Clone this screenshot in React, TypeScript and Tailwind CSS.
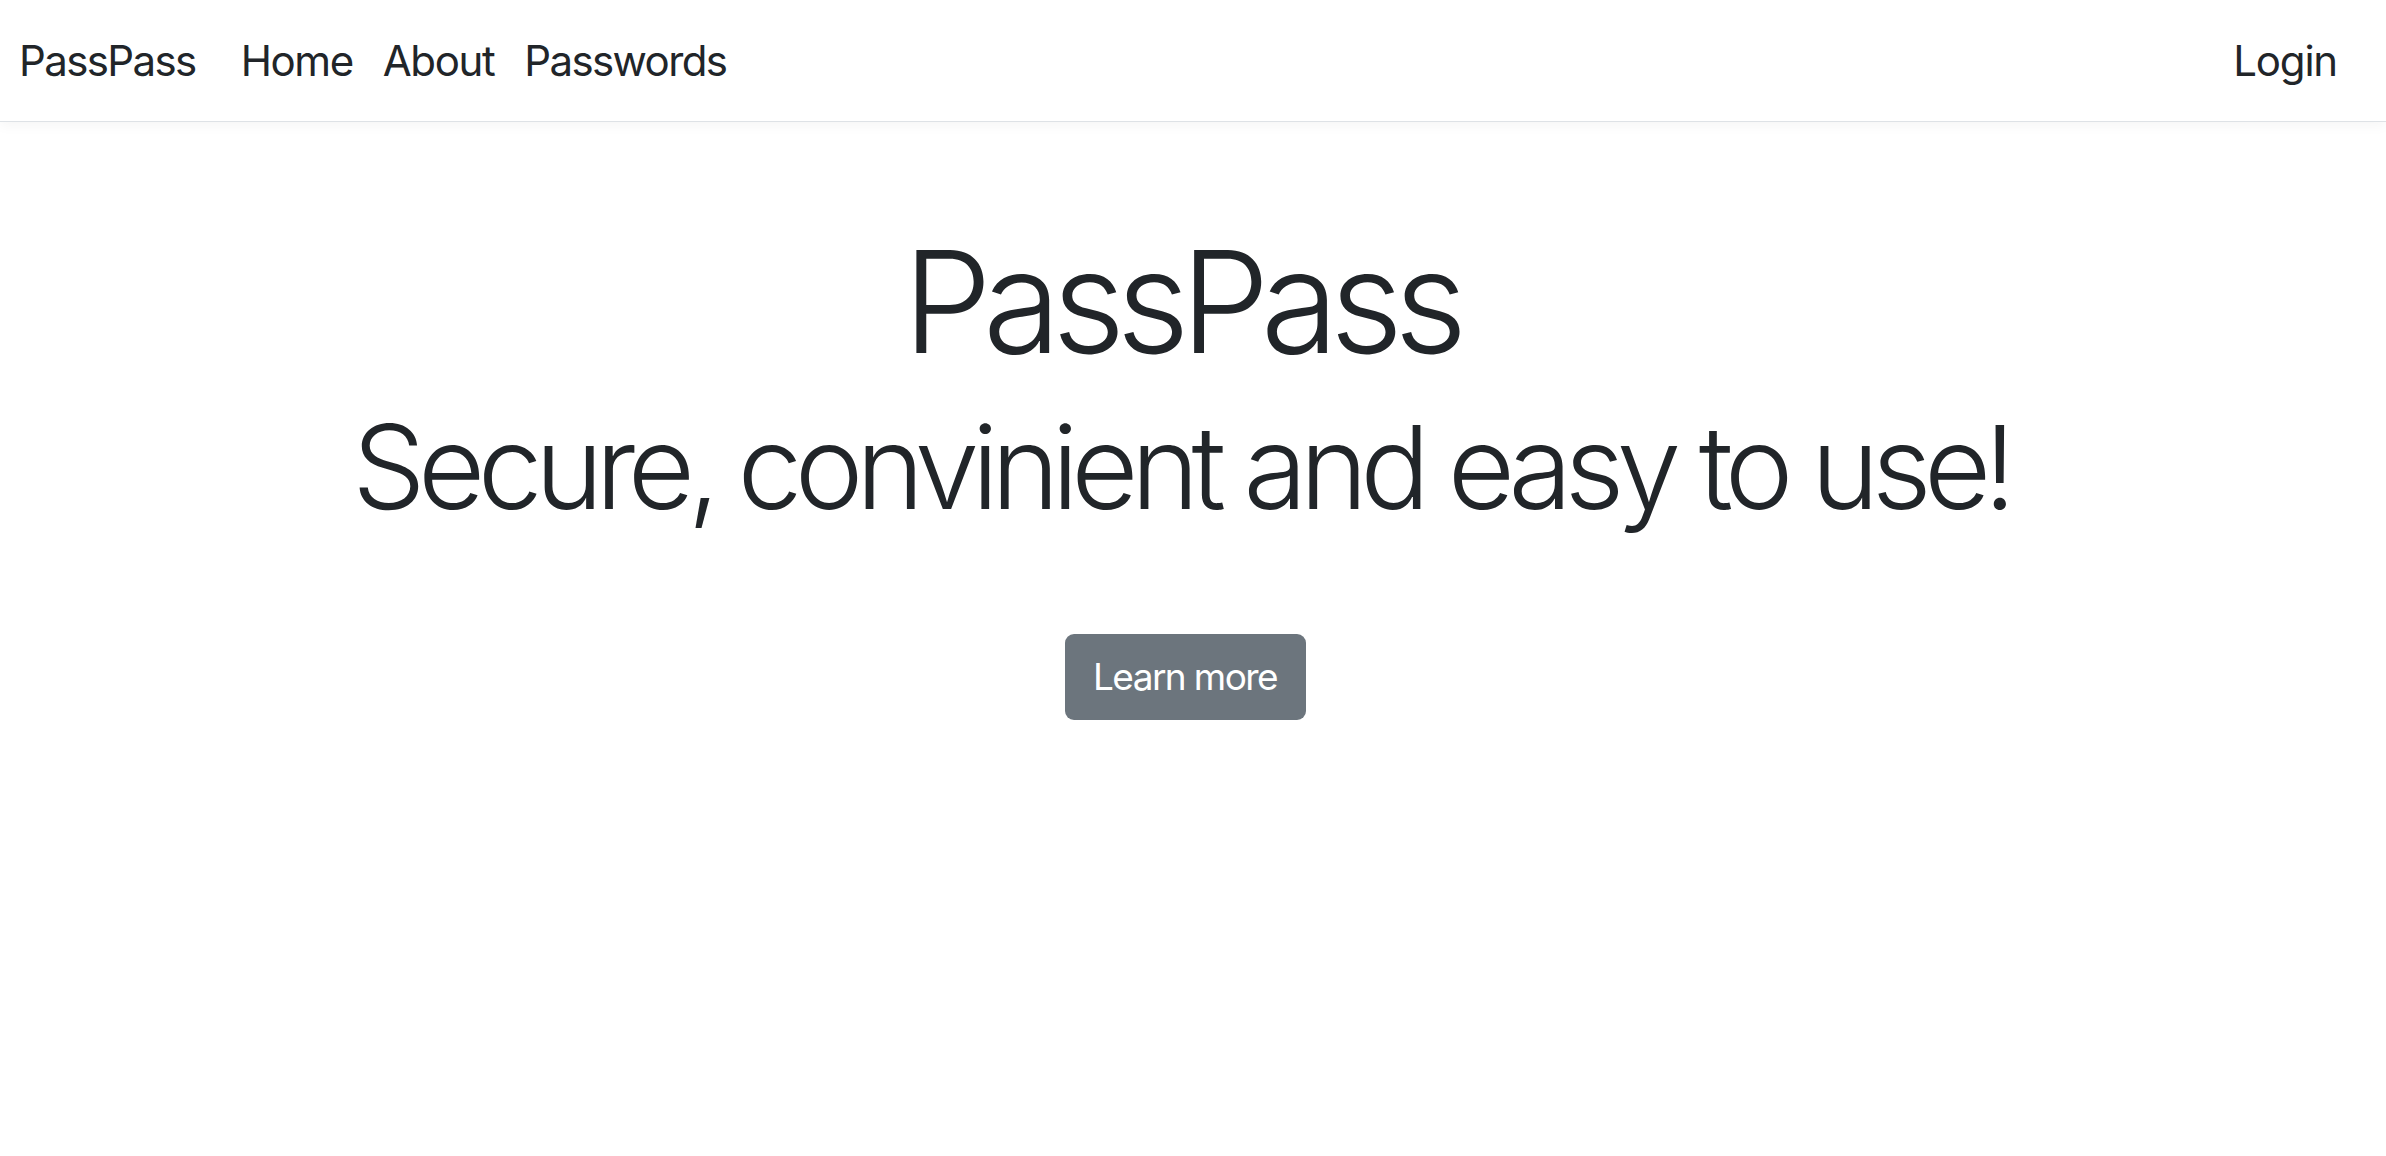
export default function App() {
  return (
    <div className="min-h-screen bg-white text-[#212529] font-['Inter','Liberation_Sans',sans-serif]">
      {/* Navbar */}
      <nav className="h-[122px] flex items-center justify-between pl-[19px] pr-[20px] border-b border-[#dee2e6] shadow-[0_4px_12px_rgba(0,0,0,0.04)]">
        <div className="flex items-center">
          <a className="text-[42px] leading-none tracking-[-1.6px]">PassPass</a>
          <div className="flex items-center gap-[30px] ml-[45px]">
            <a className="text-[42px] leading-none tracking-[-1.4px]">Home</a>
            <a className="text-[42px] leading-none tracking-[-1.4px]">About</a>
            <a className="text-[42px] leading-none tracking-[-1.6px]">Passwords</a>
          </div>
        </div>
        <a className="text-[42px] leading-none tracking-[-1.2px] mr-[29px]">Login</a>
      </nav>

      {/* Hero */}
      <section className="flex flex-col items-center text-center pr-[16px]">
        <h1 className="mt-[94px] mr-[9px] text-[142px] font-light leading-[1.2] tracking-[-9px]">PassPass</h1>
        <h2 className="mt-[12px] mr-[9px] text-[116px] font-light leading-[1.2] tracking-[-7.6px]">
          Secure, convinient and easy to use!
        </h2>
        <button className="mt-[96px] h-[86px] w-[241px] rounded-[9px] bg-[#6c757d] text-white text-[37px] tracking-[-1.6px]">
          Learn more
        </button>
      </section>
    </div>
  );
}
